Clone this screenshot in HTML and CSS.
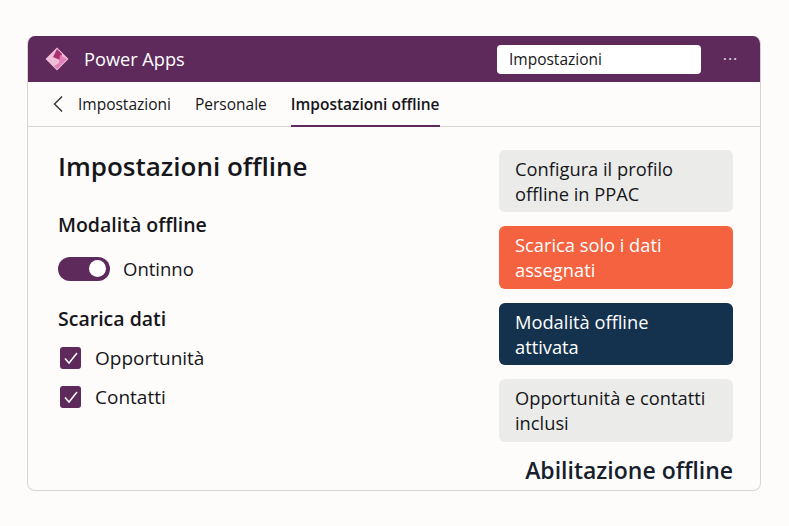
FILE: index.html
```html
<!DOCTYPE html>
<html lang="it">
<head>
  <meta charset="UTF-8">
  <meta name="viewport" content="width=device-width, initial-scale=1.0">
  <title>Impostazioni offline</title>
  <link rel="stylesheet" href="styles.css">
</head>
<body>

<div class="window">
  <header class="topbar">
    <svg class="logo" width="26" height="26" viewBox="0 0 26 26">
      <path d="M13 1.5 L24.5 13 L13 24.5 L1.5 13 Z" fill="#f0bcd8"/>
      <path d="M13 3 L18 8 L16 14 L9 11 Z" fill="#a8326f"/>
      <path d="M16 9 L23 13 L13 23 L10 20 L15 17 Z" fill="#e27fb8"/>
    </svg>
    <span class="brand">Power Apps</span>
    <div class="search">Impostazioni</div>
    <span class="more">···</span>
  </header>

  <nav class="tabs">
    <svg class="back" width="12" height="18" viewBox="0 0 12 18">
      <path d="M10 1.5 L2.5 9 L10 16.5" fill="none" stroke="#2a2a2e" stroke-width="1.3"/>
    </svg>
    <a class="tab">Impostazioni</a>
    <a class="tab">Personale</a>
    <a class="tab active">Impostazioni offline</a>
  </nav>

  <main class="content">
    <section class="settings">
      <h1>Impostazioni offline</h1>
      <h2>Modalità offline</h2>
      <div class="toggle-row">
        <span class="toggle"><span class="knob"></span></span>
        <span>Ontinno</span>
      </div>
      <h2 class="download">Scarica dati</h2>
      <div class="check-row">
        <span class="checkbox">
          <svg width="16" height="14" viewBox="0 0 16 14"><path d="M2 7.5 L6 12 L14 2" fill="none" stroke="#fff" stroke-width="1.5"/></svg>
        </span>
        <span>Opportunità</span>
      </div>
      <div class="check-row">
        <span class="checkbox">
          <svg width="16" height="14" viewBox="0 0 16 14"><path d="M2 7.5 L6 12 L14 2" fill="none" stroke="#fff" stroke-width="1.5"/></svg>
        </span>
        <span>Contatti</span>
      </div>
    </section>

    <aside class="notes">
      <div class="note grey">Configura il profilo<br>offline in PPAC</div>
      <div class="note orange">Scarica solo i dati<br>assegnati</div>
      <div class="note navy">Modalità offline<br>attivata</div>
      <div class="note grey">Opportunità e contatti<br>inclusi</div>
      <div class="caption">Abilitazione offline</div>
    </aside>
  </main>
</div>

</body>
</html>
```

FILE: styles.css
```css
body {
  margin: 0;
  height: 526px;
  box-sizing: border-box;
  padding: 36px 28px 36px 27px;
  background-color: #fdfcfa;
  color: #16161a;
  font-family: "Open Sans", "Noto Sans", sans-serif;
  overflow: hidden;
}
.window {
  height: 454px;
  border: 1px solid #d5d5d3;
  border-top: none;
  border-radius: 8px;
  overflow: hidden;
  display: flex;
  flex-direction: column;
}
.topbar {
  height: 46px;
  flex-shrink: 0;
  background-color: #5e2a5c;
  display: flex;
  align-items: center;
  padding-left: 16px;
  color: #fff;
}
.logo {
  margin-right: 14px;
}
.brand {
  font-size: 18.2px;
}
.search {
  margin-left: auto;
  width: 204px;
  height: 29px;
  box-sizing: border-box;
  padding-left: 12px;
  line-height: 29px;
  background-color: #fff;
  border-radius: 4px;
  color: #16161a;
  font-size: 15.5px;
}
.more {
  width: 59px;
  text-align: center;
  font-size: 16px;
  letter-spacing: 1px;
  color: #e6d9e6;
}
.tabs {
  height: 44px;
  flex-shrink: 0;
  display: flex;
  align-items: stretch;
  padding-left: 24px;
  border-bottom: 1px solid #d5d5d3;
}
.back {
  align-self: center;
  margin-right: 14px;
}
.tab {
  display: flex;
  align-items: center;
  font-size: 15.5px;
  margin-right: 24px;
  border-bottom: 2px solid transparent;
  margin-bottom: -1px;
}
.tab.active {
  border-bottom-color: #5e2a5c;
  font-weight: 600;
}
.content {
  flex: 1;
  display: flex;
  justify-content: space-between;
  padding: 23px 27px 0 30px;
}
h1 {
  margin: -1px 0 29px;
  font-size: 26px;
  font-weight: 600;
  line-height: 34px;
}
h2 {
  margin: 0 0 18px;
  font-size: 19.5px;
  font-weight: 600;
  line-height: 26px;
}
h2.download {
  margin-bottom: 6px;
}
.toggle-row, .check-row {
  display: flex;
  align-items: center;
  font-size: 19px;
}
.toggle-row {
  gap: 13px;
  margin-bottom: 25px;
  font-size: 18.5px;
}
.toggle {
  width: 52px;
  height: 24px;
  border-radius: 12px;
  background-color: #5e2a5c;
  display: flex;
  align-items: center;
  justify-content: flex-end;
  padding-right: 4px;
  box-sizing: border-box;
}
.knob {
  width: 17px;
  height: 17px;
  border-radius: 50%;
  background-color: #fff;
}
.check-row {
  gap: 14px;
  height: 39px;
  padding-left: 2px;
}
.checkbox {
  width: 21px;
  height: 22px;
  border-radius: 3px;
  background-color: #5e2a5c;
  display: flex;
  align-items: center;
  justify-content: center;
}
.notes {
  width: 234px;
  display: flex;
  flex-direction: column;
  gap: 14px;
}
.note {
  height: 62.4px;
  box-sizing: border-box;
  padding: 6px 16px;
  border-radius: 6px;
  font-size: 18.3px;
  line-height: 25px;
}
.grey {
  background-color: #ebecea;
}
.orange {
  background-color: #f4623f;
  color: #fff;
}
.navy {
  background-color: #14324d;
  color: #fff;
}
.caption {
  margin-top: -1px;
  text-align: right;
  font-size: 23px;
  font-weight: 600;
  line-height: 30px;
  color: #16202c;
}
```
